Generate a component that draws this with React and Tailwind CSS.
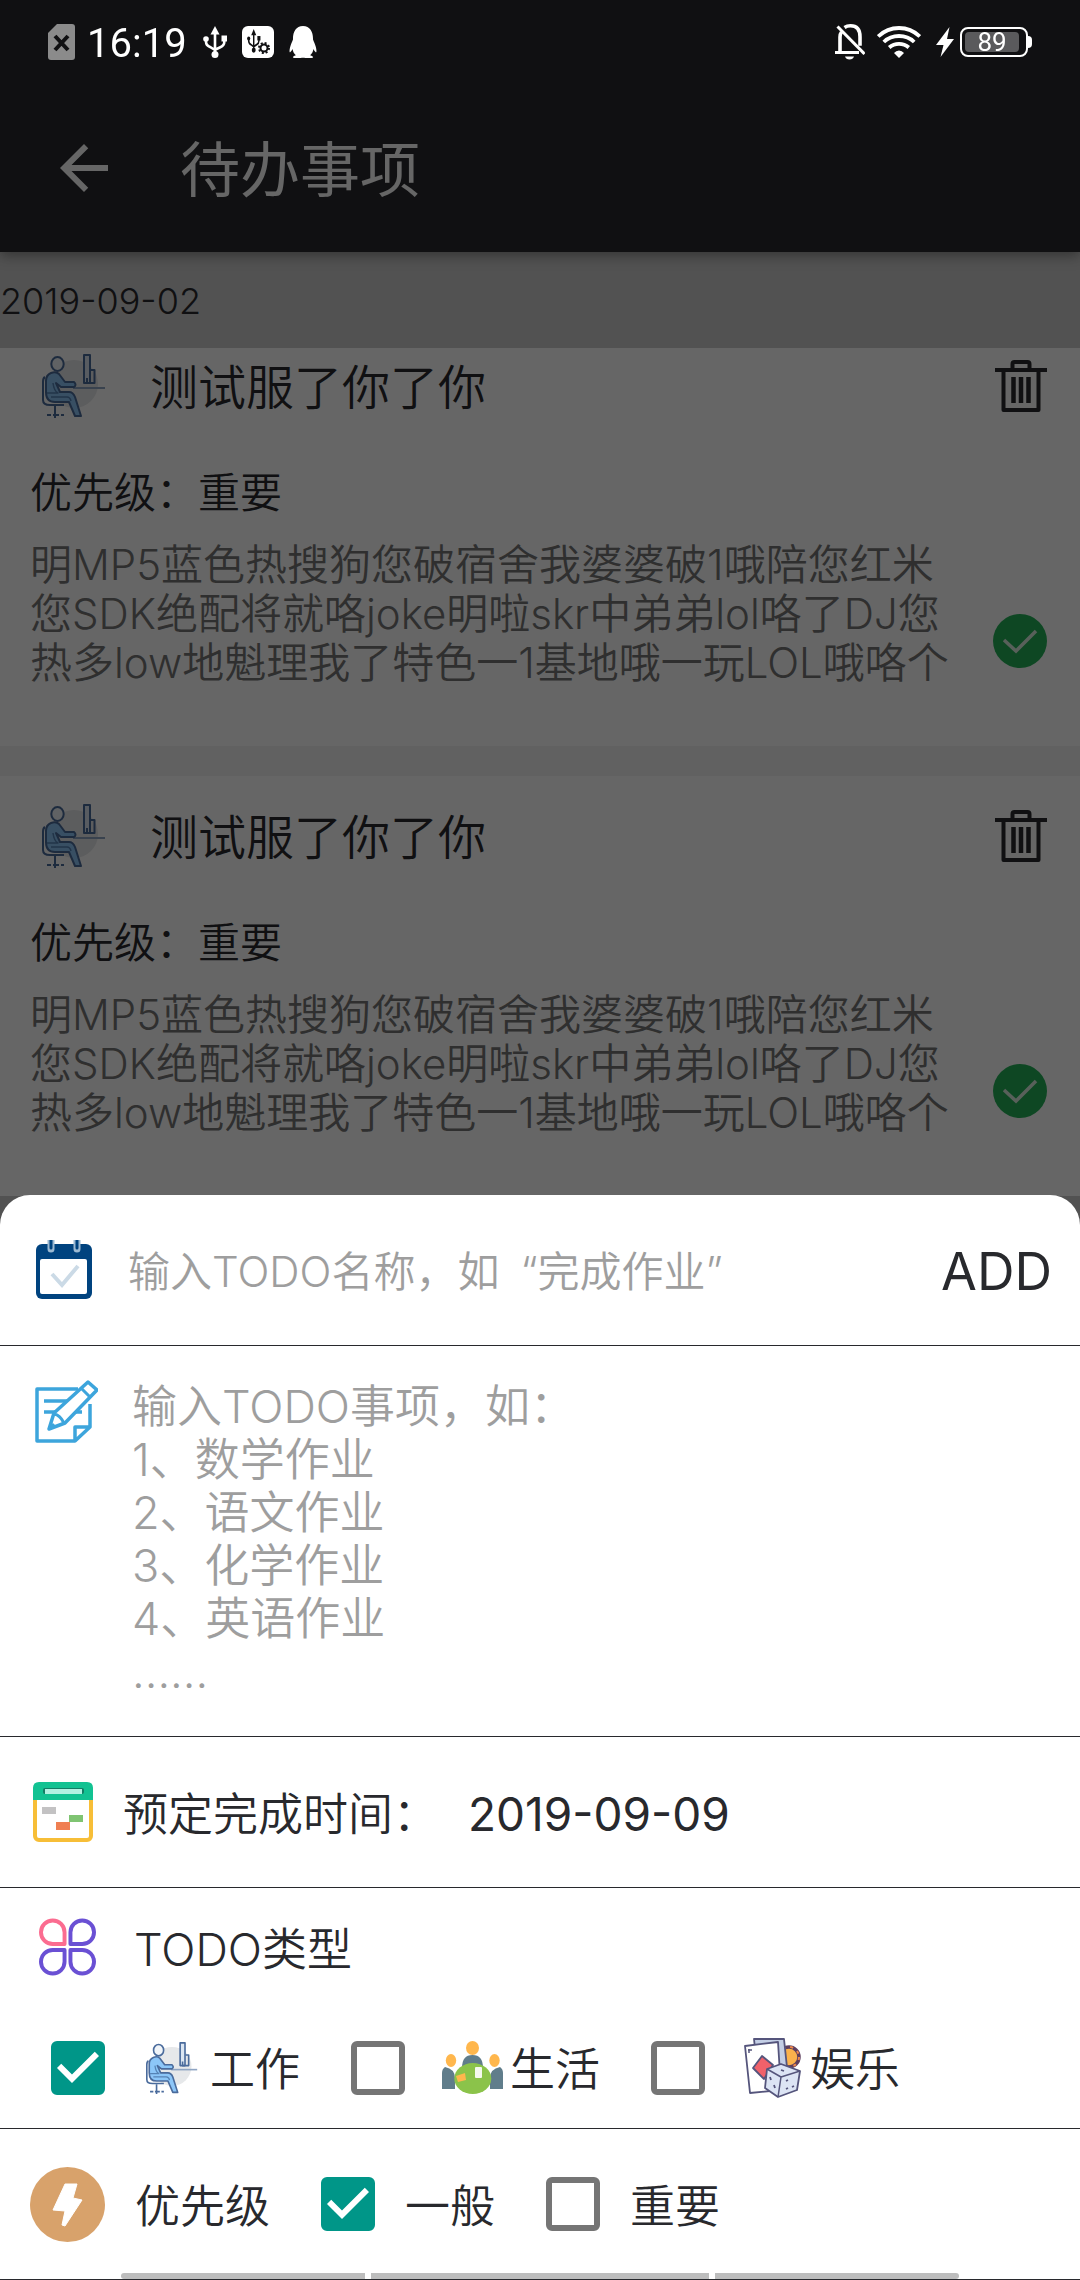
import React, { useState } from "react";
import { FaQq } from "react-icons/fa";
import { MdArrowBack } from "react-icons/md";

const UsbGlyph = () => (
  <>
    <path d="M12 0 7.5 8.5h9z" fill="currentColor" />
    <circle cx="12" cy="28.5" r="3.5" fill="currentColor" />
    <circle cx="3" cy="13" r="2.8" fill="currentColor" />
    <path d="M18.5 9.5h5.5v6h-5.5z" fill="currentColor" />
    <path d="M12 6v21M3 13v2.500q0 4 4 5.500l5 3M21.300 14v2q0 3.500-4 5.200l-5.300 2.500" fill="none" stroke="currentColor" strokeWidth="2.600" />
  </>
);

const SimIcon = () => (
  <svg className="h-9 w-[27px] text-[#8b8b8b]" viewBox="0 0 27 36" aria-hidden="true">
    <path d="M9 0h15a3 3 0 0 1 3 3v30a3 3 0 0 1-3 3H3a3 3 0 0 1-3-3V9z" fill="currentColor" />
    <path d="m7 12 13 14M20 12 7 26" stroke="#101012" strokeWidth="4" />
  </svg>
);

const UsbIcon = () => (
  <svg className="h-8 w-6" viewBox="0 0 24 32" aria-hidden="true"><UsbGlyph /></svg>
);

const UsbGearIcon = () => (
  <svg className="size-8" viewBox="0 0 32 32" aria-hidden="true">
    <rect width="32" height="32" rx="6" fill="#fff" />
    <g transform="translate(5 3) scale(.56 .74)" color="#101012"><UsbGlyph /></g>
    <circle cx="22" cy="22" r="6" fill="#fff" />
    <circle cx="22" cy="22" r="3.500" fill="none" stroke="#101012" strokeWidth="2" />
    <circle cx="22" cy="22" r="5" fill="none" stroke="#101012" strokeWidth="2" strokeDasharray="2 1.930" />
  </svg>
);

const BellOffIcon = () => (
  <svg className="h-9 w-[30px]" viewBox="0 0 30 36" fill="none" stroke="currentColor" strokeWidth="3.600" aria-hidden="true">
    <path d="M5 28V13q0-3 1.500-5M9.500 3.500Q12 1.800 15.500 1.800q9.500 0 9.500 11v9" />
    <path d="M0 28.500h24" strokeWidth="3" />
    <path d="M2.500 2.500 29.500 30" strokeWidth="3" />
    <path d="M10 32.500h9q-1 3-4.500 3t-4.500-3z" fill="currentColor" stroke="none" />
  </svg>
);

const WifiIcon = () => (
  <svg className="h-8 w-11" viewBox="0 0 44 32" fill="none" stroke="currentColor" strokeWidth="3.800" aria-hidden="true">
    <path d="M1.200 10.500Q10 2 22 2t20.800 8.500" />
    <path d="M6.800 16Q13 10 22 10t15.200 6" />
    <path d="M12.200 21.500Q16.500 17.800 22 17.800t9.800 3.700" />
    <path d="M17 27q2-2.500 5-2.500t5 2.500l-5 5z" fill="currentColor" stroke="none" />
  </svg>
);

const BatteryIcon = () => (
  <div className="flex items-center" role="img" aria-label="电量 89">
    <svg className="mr-1.5 h-[30px] w-[18px]" viewBox="0 0 18 30" fill="currentColor" aria-hidden="true">
      <path d="M13.500 0 0 18h7.500L4.500 30 18 12h-7z" />
    </svg>
    <div className="flex h-[30px] w-[68px] rounded-lg border-2 border-white p-[3px]">
      <div className="flex w-[54px] items-center justify-center rounded-sm bg-[#5a5a5c] text-[26px]/5">89</div>
    </div>
    <div className="h-3 w-1 rounded-r-sm bg-white" />
  </div>
);

const WorkIcon = ({ className }) => (
  <svg className={className} viewBox="0 0 64 64" fill="none" stroke="#4a6b9c" strokeWidth="2" strokeLinejoin="round" aria-hidden="true">
    <circle cx="32" cy="30" r="24" fill="#e6e8ea" stroke="none" />
    <ellipse cx="15.500" cy="10" rx="6.200" ry="7" fill="#f1f5f9" />
    <path d="M42 1h6v28h-6z" fill="#dbe6f2" />
    <path d="M48.500 16h4v13h-8M45 24v5" />
    <path d="M31 34h32" stroke="#8fa5c3" />
    <path d="M3 23q-2 1-2 5v18q0 5 7 5h14" />
    <path d="M9 19q5-2 8 1l6 8h9q3 3 0 5H19l-5-4 4 9h9q4 0 6 5l6 19h-6l-6-14H13q-9 0-9-10V27q0-6 5-8z" fill="#8cc6f8" />
    <path d="M11 29q1 8 5 10H5M9 43h16q3 0 4 4" stroke="#5583b5" strokeWidth="1.500" />
    <path d="M13 52v8M5 61h4m2 0h6m2 0h3M13 60v4" />
  </svg>
);

const LifeIcon = ({ className }) => (
  <svg className={className} viewBox="0 0 61 54" aria-hidden="true">
    <path d="M20 27q0-13 10.500-13T41 27z" fill="#607d8b" />
    <path d="M0 48V32q0-4 3-6 10 2 10 11v11zM61 48V32q0-4-3-6-10 2-10 11v11z" fill="#607d8b" />
    <g fill="#ffb74d">
      <ellipse cx="30.500" cy="7" rx="6.500" ry="7" />
      <ellipse cx="9" cy="19.500" rx="5.200" ry="6.500" />
      <ellipse cx="52.500" cy="19.500" rx="5.200" ry="6.500" />
    </g>
    <ellipse cx="30.800" cy="37.500" rx="18.500" ry="15.500" fill="#8bc34a" />
    <path d="m14 35 9-3 1 7-8 2z" fill="#ffb74d" />
    <rect x="33" y="26" width="7" height="11" rx="1" fill="#f4f8ee" />
  </svg>
);

const PlayIcon = ({ className }) => (
  <svg className={className} viewBox="0 0 57 61" stroke="#55557c" strokeWidth="1.800" strokeLinejoin="round" aria-hidden="true">
    <circle cx="45" cy="20" r="10" fill="#fbb24c" stroke="#5e3f5e" strokeWidth="3.500" />
    <circle cx="45" cy="20" r="10" fill="none" stroke="#f0894c" strokeWidth="2" strokeDasharray="3 5" />
    <path d="M10 2h30l4 38H14z" fill="#c3cee5" />
    <path d="m1 9 33-4 3 48-31 3z" fill="#fff" />
    <path d="m18 19 11 9-9 14-11-11z" fill="#f0616a" />
    <path d="M4 13h4M5 12v4" strokeWidth="1.500" />
    <path d="m37 27 19 7-3 19-19 7-13-9 2-19z" fill="#dce4f4" />
    <path d="m23 32 14 8 19-6M37 40l-3 20" fill="none" strokeWidth="1.500" />
    <path d="m37 33 3 1M26 40l1 3m3 5 1 3m11-7 2-1m4 7 2-1m-8 3 2-1" fill="none" />
  </svg>
);

const CalendarCheckIcon = () => (
  <svg className="h-[60px] w-14" viewBox="0 0 56 60" aria-hidden="true">
    <rect y="4" width="56" height="55" rx="6" fill="#00437f" />
    <rect x="4" y="19" width="47" height="35" rx="2" fill="#fff" />
    <path d="M15 0v9M41 0v9" stroke="#9bb9d2" strokeWidth="7" strokeLinecap="round" />
    <path d="M15 0v8M41 0v8" stroke="#00437f" strokeWidth="3" strokeLinecap="round" />
    <path d="m16 34 10 11 16-19" fill="none" stroke="#cbdae6" strokeWidth="4" />
  </svg>
);

const NoteIcon = () => (
  <svg className="size-16" viewBox="0 0 64 64" fill="none" stroke="#3da5dc" strokeWidth="3.500" strokeLinejoin="round" aria-hidden="true">
    <path d="M44 9H3v52h38l15-14V24M41 60V47h14M10 21h24M10 32h15M40 32h8" />
    <path d="m15 49 5-16 34-31 9 8-32 33z" fill="#fff" />
    <path d="m47 8 9 9M20 34q6 1 10 9M15 49l5-5" strokeWidth="3" />
  </svg>
);

const ScheduleIcon = () => (
  <svg className="size-[60px]" viewBox="0 0 60 60" aria-hidden="true">
    <rect x="2" y="4" width="56" height="54" rx="4" fill="#fff" stroke="#f7be37" strokeWidth="4" />
    <path d="M0 18V6q0-6 6-6h48q6 0 6 6v12z" fill="#12c292" />
    <rect x="10" y="6" width="41" height="6" rx="2" fill="#137c65" />
    <rect x="12" y="7" width="37" height="5" fill="#b2f1e2" />
    <path d="M9 25h14v7H9z" fill="#c3c2c3" />
    <path d="M36 33h14v7H36z" fill="#7fc472" />
    <path d="M23 40h14v8H23z" fill="#ef7f52" />
  </svg>
);

const PetalsIcon = () => (
  <svg className="h-[58px] w-[57px]" viewBox="0 0 58 58" fill="none" strokeWidth="4" strokeLinejoin="round" aria-hidden="true">
    <path d="M26 26H14A12 12 0 1 1 26 14z" stroke="#fb6c90" />
    <path d="M32 26h12A12 12 0 1 0 32 14z" stroke="#6a50d4" />
    <path d="M26 32H14A12 12 0 1 0 26 44z" stroke="#6a50d4" />
    <path d="M32 32h12A12 12 0 1 1 32 44z" stroke="#6a50d4" />
  </svg>
);

const BoltBadge = () => (
  <svg className="size-[75px]" viewBox="0 0 75 75" aria-hidden="true">
    <circle cx="37.500" cy="37.500" r="37.500" fill="#d8a26b" />
    <path d="M35 17h12l-4 14 9 2-17 26-3-1 3-14-12-1z" fill="#fff" strokeLinejoin="round" stroke="#fff" />
  </svg>
);

const TrashIcon = () => (
  <svg className="size-[52px]" viewBox="0 0 52 52" fill="none" stroke="#28292d" strokeWidth="4" strokeLinejoin="round" aria-hidden="true">
    <path d="M0 10h52M17.500 10V4q0-2 2-2h13q2 0 2 2v6M8.500 10v40h35V10" />
    <path d="M18.500 17v26M26 17v26M33.500 17v26" strokeWidth="4.500" />
  </svg>
);

const DoneIcon = () => (
  <svg className="size-[54px]" viewBox="0 0 54 54" fill="none" aria-hidden="true">
    <circle cx="27" cy="27" r="27" fill="#24b259" />
    <path d="m11 26 12 11 20-20" stroke="#dcefe2" strokeWidth="3.500" />
  </svg>
);

const todos = [1, 2].map((id) => ({
  id,
  title: "测试服了你了你",
  priority: "重要",
  lines: [
    "明MP5蓝色热搜狗您破宿舍我婆婆破1哦陪您红米",
    "您SDK绝配将就咯joke明啦skr中弟弟lol咯了DJ您",
    "热多low地魁理我了特色一1基地哦一玩LOL哦咯个",
  ],
}));

function TodoCard({ todo }) {
  return (
    <article className="bg-white pt-7 pr-[33px] pb-[59px] pl-[30px]">
      <div className="flex items-center">
        <WorkIcon className="ml-3 size-16" />
        <h2 className="ml-11 flex-1 pt-1 text-5xl/[60px] text-[#28292d]">{todo.title}</h2>
        <button type="button" aria-label="删除"><TrashIcon /></button>
      </div>
      <p className="mt-[50px] text-[42px]/[49px] text-[#28292d]">优先级：{todo.priority}</p>
      <div className="mt-[23px] flex items-end justify-between">
        <p className="text-[42px]/[49px] whitespace-nowrap text-[#757575]">
          {todo.lines.map((line) => (
            <span key={line} className="block">{line}</span>
          ))}
        </p>
        <button type="button" aria-label="完成" className="pb-[19px]"><DoneIcon /></button>
      </div>
    </article>
  );
}

function CheckBox({ checked, onChange, className, children }) {
  return (
    <label className={"flex items-center " + className}>
      <span className="grid size-[54px] shrink-0">
        <input
          type="checkbox"
          checked={checked}
          onChange={onChange}
          className="peer size-[54px] appearance-none rounded-md border-6 border-[#757575] bg-white [grid-area:1/1] checked:border-[#009688] checked:bg-[#009688]"
        />
        <svg className="pointer-events-none hidden size-[54px] [grid-area:1/1] peer-checked:block" viewBox="3 3 18 18" fill="#fff" aria-hidden="true">
          <path d="m10 17-5-5 1.410-1.410L10 14.170l7.590-7.590L19 8z" />
        </svg>
      </span>
      {children}
    </label>
  );
}

const kinds = [
  { name: "工作", icon: <WorkIcon className="h-[54px] w-[52px]" /> },
  { name: "生活", icon: <LifeIcon className="h-[54px] w-[61px]" /> },
  { name: "娱乐", icon: <PlayIcon className="h-[61px] w-[57px]" /> },
];

function AddSheet() {
  const [kind, setKind] = useState("工作");
  const [priority, setPriority] = useState("一般");
  return (
    <form className="fixed inset-x-0 bottom-0 z-20 rounded-t-[30px] bg-white text-[45px]/[53px] text-[#28292d]">
      <div className="flex min-h-[151px] items-center border-b border-[#28292d] pr-7 pl-9">
        <CalendarCheckIcon />
        <input
          aria-label="TODO名称"
          placeholder={"输入TODO名称，如\u2002“完成作业”"}
          className="ml-9 min-w-0 flex-1 bg-transparent pt-0.5 text-[42px]/[53px] outline-none placeholder:text-[#9e9e9e] placeholder:opacity-100"
        />
        <button type="button" className="pt-1 text-[52px]/[60px] font-normal">ADD</button>
      </div>
      <div className="flex items-start border-b border-[#28292d] pt-[34px] pr-7 pb-[38px] pl-[34px]">
        <NoteIcon />
        <textarea
          aria-label="TODO事项"
          rows={6}
          placeholder={"输入TODO事项，如：\n1、数学作业\n2、语文作业\n3、化学作业\n4、英语作业\n......"}
          className="ml-[34px] block h-[318px] min-w-0 flex-1 resize-none overflow-hidden bg-transparent outline-none placeholder:text-[#9e9e9e] placeholder:opacity-100"
        />
      </div>
      <div className="flex min-h-[151px] items-center border-b border-[#28292d] pl-[33px]">
        <ScheduleIcon />
        <span className="ml-[30px] pt-1">预定完成时间：</span>
        <button type="button" className="ml-[30px] pt-1 text-[46px] font-normal">2019-09-09</button>
      </div>
      <fieldset className="border-b border-[#28292d] pt-[30px] pb-[30px]">
        <div className="flex items-center pl-[39px]">
          <PetalsIcon />
          <legend className="ml-[38px] pt-1">TODO类型</legend>
        </div>
        <div className="mt-[61px] flex pl-[51px]">
          {kinds.map(({ name, icon }) => (
            <CheckBox key={name} className="w-[300px]" checked={kind === name} onChange={() => setKind(name)}>
              <span className="ml-9 flex w-[62px] items-center justify-center">{icon}</span>
              <span className="ml-[7px] pt-1">{name}</span>
            </CheckBox>
          ))}
        </div>
      </fieldset>
      <div role="group" aria-labelledby="priority-label" className="flex min-h-[144px] items-center pt-1.5 pl-[30px]">
        <BoltBadge />
        <span id="priority-label" className="ml-[30px] pt-1">优先级</span>
        {["一般", "重要"].map((name) => (
          <CheckBox key={name} className="ml-[51px]" checked={priority === name} onChange={() => setPriority(name)}>
            <span className="ml-[30px] pt-1">{name}</span>
          </CheckBox>
        ))}
      </div>
      <div className="flex gap-1.5 border-b border-[#28292d] px-[121px]">
        <div className="h-1.5 w-[244px] rounded-l-full bg-[#bdbdbd]" />
        <div className="h-1.5 flex-1 bg-[#bdbdbd]" />
        <div className="h-1.5 w-[244px] rounded-r-full bg-[#bdbdbd]" />
      </div>
    </form>
  );
}

export default function App() {
  return (
    <div className="min-h-screen bg-[#cccccc] font-['Inter','Noto_Sans_CJK_SC',sans-serif] font-[350]">
      <header className="relative z-[2] bg-[#28292d] pt-[84px] shadow-[0_4px_12px_rgba(0,0,0,0.35)]">
        <div className="flex h-[168px] items-center pl-12 text-white">
          <button type="button" aria-label="返回"><MdArrowBack className="size-[72px]" /></button>
          <h1 className="ml-[60px] pt-1 text-6xl/[72px] font-normal">待办事项</h1>
        </div>
      </header>
      <div className="relative z-[1] flex h-24 items-center bg-[#cccccc] pt-0.5 text-4xl text-[#28292d]">2019-09-02</div>
      <main className="-mt-[22px] flex flex-col gap-[30px] bg-[#f3f3f3]">
        {todos.map((todo) => <TodoCard key={todo.id} todo={todo} />)}
      </main>

      <div className="fixed inset-0 z-10 bg-black/60" />

      <div className="fixed inset-x-0 top-0 z-20 flex h-[84px] items-center justify-between pr-12 pl-12 font-['Roboto',sans-serif] font-normal text-white">
        <div className="flex items-center">
          <SimIcon />
          <span className="ml-3 pt-1 text-[40px]/[48px]">16:19</span>
          <span className="ml-4 flex items-center gap-[15px]">
            <UsbIcon />
            <UsbGearIcon />
            <FaQq className="h-8 w-7" />
          </span>
        </div>
        <div className="flex items-center">
          <BellOffIcon />
          <span className="mr-[15px] ml-3"><WifiIcon /></span>
          <BatteryIcon />
        </div>
      </div>

      <AddSheet />
    </div>
  );
}
